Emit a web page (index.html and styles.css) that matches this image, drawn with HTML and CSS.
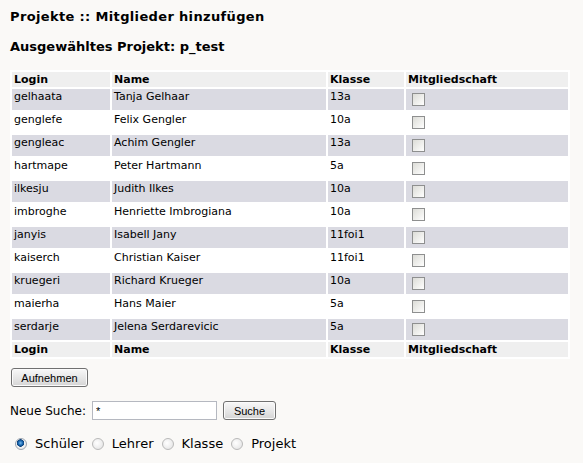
FILE: index.html
```html
<!DOCTYPE html>
<html>
<head>
<meta charset="utf-8">
<link rel="stylesheet" href="styles.css">
</head>
<body>
<h1 class="title">Projekte :: Mitglieder hinzufügen</h1>
<h2 class="subtitle">Ausgewähltes Projekt: p_test</h2>
<form>
<table class="members">
  <thead>
    <tr><th class="c-login">Login</th><th class="c-name">Name</th><th class="c-klasse">Klasse</th><th class="c-mit">Mitgliedschaft</th></tr>
  </thead>
  <tbody>
    <tr class="odd"><td>gelhaata</td><td>Tanja Gelhaar</td><td>13a</td><td><input type="checkbox" class="cb"></td></tr>
    <tr class="even"><td>genglefe</td><td>Felix Gengler</td><td>10a</td><td><input type="checkbox" class="cb"></td></tr>
    <tr class="odd"><td>gengleac</td><td>Achim Gengler</td><td>13a</td><td><input type="checkbox" class="cb"></td></tr>
    <tr class="even"><td>hartmape</td><td>Peter Hartmann</td><td>5a</td><td><input type="checkbox" class="cb"></td></tr>
    <tr class="odd"><td>ilkesju</td><td>Judith Ilkes</td><td>10a</td><td><input type="checkbox" class="cb"></td></tr>
    <tr class="even"><td>imbroghe</td><td>Henriette Imbrogiana</td><td>10a</td><td><input type="checkbox" class="cb"></td></tr>
    <tr class="odd"><td>janyis</td><td>Isabell Jany</td><td>11foi1</td><td><input type="checkbox" class="cb"></td></tr>
    <tr class="even"><td>kaiserch</td><td>Christian Kaiser</td><td>11foi1</td><td><input type="checkbox" class="cb"></td></tr>
    <tr class="odd"><td>kruegeri</td><td>Richard Krueger</td><td>10a</td><td><input type="checkbox" class="cb"></td></tr>
    <tr class="even"><td>maierha</td><td>Hans Maier</td><td>5a</td><td><input type="checkbox" class="cb"></td></tr>
    <tr class="odd"><td>serdarje</td><td>Jelena Serdarevicic</td><td>5a</td><td><input type="checkbox" class="cb"></td></tr>
  </tbody>
  <tfoot>
    <tr><th>Login</th><th>Name</th><th>Klasse</th><th>Mitgliedschaft</th></tr>
  </tfoot>
</table>
<div class="actions"><button type="button" class="btn btn-add">Aufnehmen</button></div>
</form>
<div class="search">
  <label class="search-label">Neue Suche:</label>
  <input type="text" class="search-input" value="*">
  <button type="button" class="btn btn-search">Suche</button>
</div>
<div class="radios">
  <label class="opt"><input type="radio" name="t" class="rb" checked>Schüler</label>
  <label class="opt"><input type="radio" name="t" class="rb">Lehrer</label>
  <label class="opt"><input type="radio" name="t" class="rb">Klasse</label>
  <label class="opt"><input type="radio" name="t" class="rb">Projekt</label>
</div>
</body>
</html>
```

FILE: styles.css
```css
html { background: #faf9f7; }
body {
  margin: 0;
  padding: 8px 10px;
  font-family: "DejaVu Sans", Verdana, sans-serif;
  font-size: 11px;
  color: #000;
}
.title {
  font-size: 13px;
  font-weight: bold;
  margin: 1px 0 0 0;
  line-height: 16px;
  letter-spacing: 0.35px;
}
.subtitle {
  font-size: 13px;
  font-weight: bold;
  margin: 14px 0 0 0;
  line-height: 16px;
}
form { margin: 0; }
.members {
  margin-top: 15px;
  width: 560px;
  border-collapse: separate;
  border-spacing: 2px;
  background: #ffffff;
  table-layout: fixed;
}
.c-login { width: 94px; }
.c-name { width: 210px; }
.c-klasse { width: 72px; }
.members th {
  background: #efefef;
  text-align: left;
  font-weight: bold;
  padding: 1px 2px;
  line-height: 13px;
  vertical-align: top;
}
.members td {
  padding: 1px 2px;
  line-height: 13px;
  vertical-align: top;
}
.odd td { background: #dadae2; }
.even td { background: #ffffff; }
.cb {
  -webkit-appearance: none;
  appearance: none;
  width: 13px;
  height: 13px;
  margin: 3px 3px 3px 4px;
  border: 1px solid #8e8f8f;
  background: linear-gradient(135deg, #dcdcd7 0%, #f4f4f2 70%, #ffffff 100%);
  display: block;
  box-sizing: border-box;
}
.actions { margin-top: 9px; }
.btn {
  font-family: "Liberation Sans", Arial, sans-serif;
  font-size: 11px;
  color: #000;
  border: 1px solid #707070;
  border-radius: 3px;
  background: linear-gradient(#f8f8f8, #e4e4e4 60%, #d4d4d4);
  padding: 0;
  height: 19px;
  box-sizing: border-box;
  box-shadow: inset 0 0 0 1px #fbfbfb;
}
.btn-add { width: 77px; margin-left: 1px; }
.search {
  margin-top: 14px;
  display: flex;
  align-items: center;
  font-size: 12px;
}
.search-label { margin-right: 6px; }
.search-input {
  width: 125px;
  height: 19px;
  box-sizing: border-box;
  border: 1px solid #b5b8c0;
  padding: 0 3px;
  font-family: "Liberation Sans", Arial, sans-serif;
  font-size: 11px;
  background: #fff;
  margin: 0;
}
.btn-search { width: 53px; margin-left: 6px; }
.radios {
  margin-top: 16px;
  display: flex;
  align-items: center;
  font-size: 13px;
  padding-left: 5px;
}
.opt { display: flex; align-items: center; margin-right: 8px; }
.rb {
  -webkit-appearance: none;
  appearance: none;
  width: 12px;
  height: 12px;
  border-radius: 50%;
  border: 1px solid #b9b9b9;
  background: radial-gradient(circle at 40% 40%, #ffffff, #e0e0e0);
  margin: 0 8px 0 0;
  box-sizing: border-box;
}
.rb:checked {
  background: radial-gradient(circle at 45% 40%, #7ab8e8 0, #1f6fb8 2px, #0b3f78 3.5px, #f4f4f4 4px, #dedede 100%);
  border-color: #9ea6b0;
}
```
